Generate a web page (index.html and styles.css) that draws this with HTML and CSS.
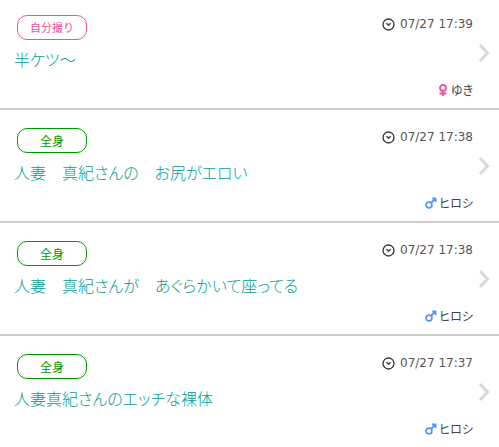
FILE: index.html
```html
<!DOCTYPE html>
<html lang="ja">
<head>
<meta charset="utf-8">
<title>投稿一覧</title>
<link rel="stylesheet" href="styles.css">
</head>
<body>
<svg class="sprite" aria-hidden="true">
  <symbol id="clock" viewBox="0 0 13 13">
    <circle cx="6.500" cy="6.500" r="5.500" fill="none" stroke="#333" stroke-width="1.300"/>
    <path d="M4 5.300H5.300L6.500 6.300 7.700 5.300H9L6.500 8z" fill="#333" stroke="#333" stroke-width=".400"/>
  </symbol>
  <symbol id="female" viewBox="0 0 12 12">
    <path d="M6 7v5M2.500 9.500h7" fill="none" stroke="#f0509a" stroke-width="1.800"/>
    <circle cx="6" cy="4" r="3" fill="none" stroke="#f0509a" stroke-width="1.800"/>
  </symbol>
  <symbol id="male" viewBox="0 0 12 12">
    <circle cx="4" cy="8" r="2.900" fill="none" stroke="#5599f5" stroke-width="1.800"/>
    <path d="M6 6 9.500 2.500" fill="none" stroke="#5599f5" stroke-width="1.800"/>
    <path d="M6.500 .500H11.500V5.500L9.800 4.500 7.500 2.200z" fill="#5599f5"/>
  </symbol>
  <symbol id="chevron" viewBox="0 0 12 20">
    <path d="M2 2 9.500 10 2 18" fill="none" stroke="#d9d9d9" stroke-width="3"/>
  </symbol>
</svg>
<ul class="posts">
  <li><a class="post" href="#">
    <span class="main"><span class="tag selfie">自分撮り</span><span class="title">半ケツ～</span></span>
    <span class="meta"><span class="date"><svg class="clock"><use href="#clock"/></svg><time>07/27 17:39</time></span><span class="author"><svg class="sex"><use href="#female"/></svg>ゆき</span></span>
    <svg class="chevron"><use href="#chevron"/></svg>
  </a></li>
  <li><a class="post" href="#">
    <span class="main"><span class="tag">全身</span><span class="title">人妻　真紀さんの　お尻がエロい</span></span>
    <span class="meta"><span class="date"><svg class="clock"><use href="#clock"/></svg><time>07/27 17:38</time></span><span class="author"><svg class="sex"><use href="#male"/></svg>ヒロシ</span></span>
    <svg class="chevron"><use href="#chevron"/></svg>
  </a></li>
  <li><a class="post" href="#">
    <span class="main"><span class="tag">全身</span><span class="title">人妻　真紀さんが　あぐらかいて座ってる</span></span>
    <span class="meta"><span class="date"><svg class="clock"><use href="#clock"/></svg><time>07/27 17:38</time></span><span class="author"><svg class="sex"><use href="#male"/></svg>ヒロシ</span></span>
    <svg class="chevron"><use href="#chevron"/></svg>
  </a></li>
  <li><a class="post" href="#">
    <span class="main"><span class="tag">全身</span><span class="title">人妻真紀さんのエッチな裸体</span></span>
    <span class="meta"><span class="date"><svg class="clock"><use href="#clock"/></svg><time>07/27 17:37</time></span><span class="author"><svg class="sex"><use href="#male"/></svg>ヒロシ</span></span>
    <svg class="chevron"><use href="#chevron"/></svg>
  </a></li>
</ul>
</body>
</html>
```

FILE: styles.css
```css
body {
  margin: 0;
  background: #fff;
  color: #444;
  font-family: "Noto Sans CJK JP", sans-serif;
  font-weight: 400;
}

.sprite {
  display: none;
}

.posts {
  margin: 0;
  padding: 0;
  list-style: none;
}

.posts li {
  border-bottom: 2px solid #ccc;
}

.posts li:last-child {
  border-bottom: 0;
}

.post {
  display: flex;
  align-items: center;
  padding: 18px 9px 9px 14px;
  color: inherit;
  text-decoration: none;
}

.posts li:first-child .post {
  padding-top: 15px;
}

.main {
  display: flex;
  flex: 1;
  flex-direction: column;
  align-items: flex-start;
  align-self: stretch;
  gap: 7px;
}

.tag {
  box-sizing: border-box;
  width: 70px;
  margin-left: 3px;
  border: 1px solid #090;
  border-radius: 10px;
  color: #090;
  font-size: 12px;
  line-height: 23px;
  text-align: center;
}

.tag.selfie {
  border-color: #f0509a;
  color: #f0509a;
  font-size: 11px;
}

.title {
  color: #009d92;
  font-size: 16px;
  font-feature-settings: "palt";
  font-weight: 300;
  line-height: 24px;
}

.meta {
  display: flex;
  flex-direction: column;
  align-items: flex-end;
  gap: 46px;
  margin-right: 5px;
}

.date,
.author {
  display: flex;
  align-items: center;
  gap: 3px;
  line-height: 19px;
}

.date {
  gap: 5px;
  color: #555;
  font-family: "DejaVu Sans", sans-serif;
  font-size: 12px;
}

.author {
  gap: 2px;
  font-size: 12px;
  font-feature-settings: "palt";
}

.clock {
  width: 13px;
  height: 13px;
}

.sex {
  width: 12px;
  height: 12px;
}

.chevron {
  width: 12px;
  height: 20px;
  margin-bottom: 8px;
}
```
